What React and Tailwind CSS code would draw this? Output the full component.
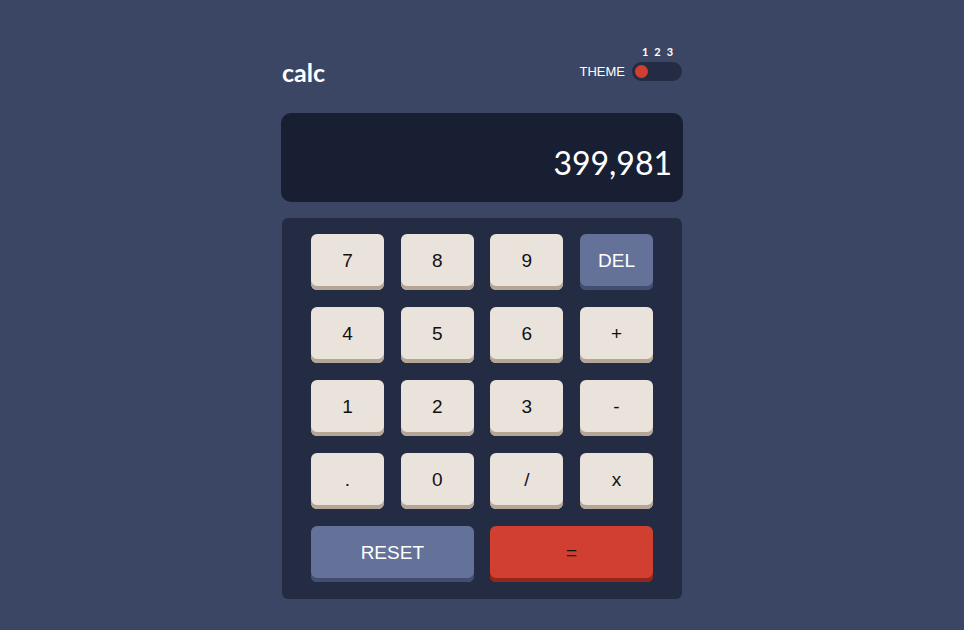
import React from "react";

const Key = ({ label, variant = "num", wide = false }) => {
  const base =
    "h-[56px] rounded-[6px] flex items-center justify-center pb-[3px] text-[19px] leading-none";
  const styles = {
    num: "bg-[#eae3db] text-[#111] shadow-[inset_0_-4px_0_#b4a597]",
    blue: "bg-[#647299] text-white shadow-[inset_0_-4px_0_#414e72]",
    red: "bg-[#d13f30] text-[#111] shadow-[inset_0_-4px_0_#93261a]",
  };
  return (
    <div
      className={`${base} ${styles[variant]} ${wide ? "col-span-2" : ""}`}
      style={{ fontFamily: '"Liberation Sans", Arial, sans-serif' }}
    >
      {label}
    </div>
  );
};

export default function App() {
  const rows = [
    ["7", "8", "9", "DEL"],
    ["4", "5", "6", "+"],
    ["1", "2", "3", "-"],
    [".", "0", "/", "x"],
  ];
  return (
    <div className="min-h-[630px] w-full bg-[#3a4663] flex flex-col items-center pt-[46px]">
      <div className="w-[402px]">
        <div className="flex items-end justify-between pl-[1px] pr-[1px]">
          <span
            className="text-white font-bold text-[25px] leading-none mb-[-4px]"
            style={{ fontFamily: "Lato, sans-serif" }}
          >
            calc
          </span>
          <div className="flex items-end gap-[7px]">
            <span
              className="text-white text-[13px] leading-none pb-[3px]"
              style={{ fontFamily: '"Liberation Sans", Arial, sans-serif' }}
            >
              THEME
            </span>
            <div className="flex flex-col">
              <div
                className="flex justify-center gap-[6px] text-white font-bold text-[11px] leading-none mb-[5px] pl-[1px]"
                style={{ fontFamily: "Lato, sans-serif" }}
              >
                <span>1</span>
                <span>2</span>
                <span>3</span>
              </div>
              <div className="w-[50px] h-[19px] rounded-full bg-[#232c43] flex items-center px-[3px]">
                <div className="w-[13px] h-[13px] rounded-full bg-[#d13f30]" />
              </div>
            </div>
          </div>
        </div>

        <div className="mt-[32px] h-[89px] rounded-[10px] bg-[#181f33] flex items-center justify-end pr-[11px] pt-[10px]">
          <span
            className="text-white text-[32px] leading-none"
            style={{ fontFamily: "Lato, sans-serif" }}
          >
            399,981
          </span>
        </div>

        <div className="mt-[16px] mx-[1px] rounded-[6px] bg-[#232c43] px-[29px] pt-[16px] pb-[17px]">
          <div className="grid grid-cols-4 gap-x-[16.7px] gap-y-[17px]">
            {rows.flat().map((k) => (
              <Key key={k} label={k} variant={k === "DEL" ? "blue" : "num"} />
            ))}
            <Key label="RESET" variant="blue" wide />
            <Key label="=" variant="red" wide />
          </div>
        </div>
      </div>
    </div>
  );
}
